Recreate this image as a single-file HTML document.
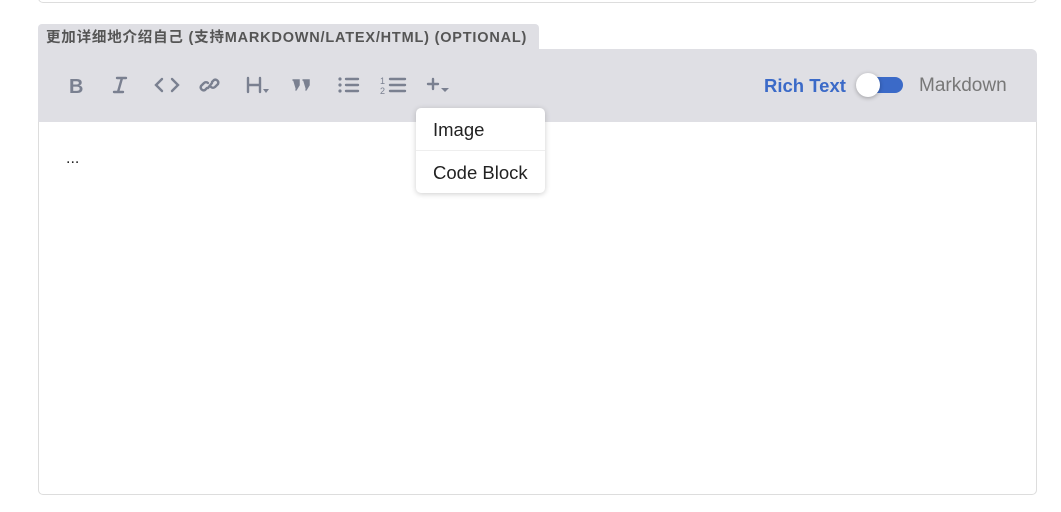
<!DOCTYPE html>
<html><head><meta charset="utf-8"><style>
body{margin:0;width:1061px;height:512px;background:#fff;position:relative;font-family:"Liberation Sans","Noto Sans CJK SC",sans-serif;overflow:hidden}
.top{position:absolute;left:38px;top:-10px;width:997px;height:12px;border:1px solid #ddd;border-top:none;border-radius:0 0 5px 5px}
.tab{position:absolute;left:38px;top:24px;width:501px;height:26px;background:#dfdfe4;border-radius:4px 4px 0 0;font-size:14.5px;font-weight:bold;color:#555;line-height:29px;padding-left:8px;box-sizing:border-box;white-space:nowrap;letter-spacing:0.8px}
.bar{position:absolute;left:38px;top:49px;width:999px;height:73px;background:#dfdfe4;border-radius:0 6px 0 0}
.ed{position:absolute;left:38px;top:122px;width:997px;height:372px;border:1px solid #ddd;border-top:none;border-radius:0 0 5px 5px}
.menu{position:absolute;left:416px;top:108px;width:129px;height:85px;background:#fff;border-radius:5px;box-shadow:0 1px 6px rgba(0,0,0,.2);font-size:18.5px;color:#222}
.menu div{height:42px;line-height:43px;padding-left:17px}
</style></head><body>
<div class="top"></div>
<div class="tab">更加详细地介绍自己 (支持MARKDOWN/LATEX/HTML) (OPTIONAL)</div>
<div class="bar"></div>
<div class="ed"></div>
<svg style="position:absolute;left:0;top:0" width="1061" height="512" fill="none" stroke="#7a8090" stroke-width="2.4" stroke-linecap="round">
<text x="69" y="93" font-family="Liberation Sans" font-weight="bold" font-size="20" fill="#7a8090" stroke="none">B</text>
<path d="M117 78h9M114 92h9M122 78l-4 14"/>
<path d="M162 79l-6 6 6 6M172 79l6 6-6 6"/>
<path d="M207 88l-2 2a3 3 0 0 1-4-4l3-3a3 3 0 0 1 4 0M212 82l2-2a3 3 0 0 1 4 4l-3 3a3 3 0 0 1-4 0M208 88l4-5"/>
<path d="M248 78v14M260 78v14M248 85h12"/>
<path d="M263 89h6l-3 4z" fill="#7a8090" stroke="none"/>
<path d="M293 80h6v5l-3 5M303 80h6v5l-3 5" fill="#7a8090" stroke-width="1.5"/>
<circle cx="340" cy="79" r="1.6" fill="#7a8090" stroke="none"/><circle cx="340" cy="85" r="1.6" fill="#7a8090" stroke="none"/><circle cx="340" cy="91" r="1.6" fill="#7a8090" stroke="none"/>
<path d="M346 79h12M346 85h12M346 91h12"/>
<text x="380" y="84" font-size="9" fill="#7a8090" stroke="none" font-family="Liberation Sans">1</text>
<text x="380" y="94" font-size="9" fill="#7a8090" stroke="none" font-family="Liberation Sans">2</text>
<path d="M390 79h15M390 85h15M390 91h15"/>
<path d="M428 84h10M433 79v10"/>
<path d="M441 88h8l-4 4z" fill="#7a8090" stroke="none"/>
</svg>
<div style="position:absolute;left:764px;top:75px;font-size:18.5px;font-weight:bold;color:#3b6ac8">Rich Text</div>
<div style="position:absolute;left:858px;top:77px;width:45px;height:16px;border-radius:8px;background:#3b6ac8"></div>
<div style="position:absolute;left:856px;top:73px;width:24px;height:24px;border-radius:50%;background:#fff;box-shadow:0 1px 4px rgba(0,0,0,.3)"></div>
<div style="position:absolute;left:919px;top:75px;font-size:19px;color:#777">Markdown</div>
<div style="position:absolute;left:66px;top:150px;font-size:16px;color:#222">...</div>
<div class="menu"><div style="border-bottom:1px solid #eee">Image</div><div>Code Block</div></div>
</body></html>
